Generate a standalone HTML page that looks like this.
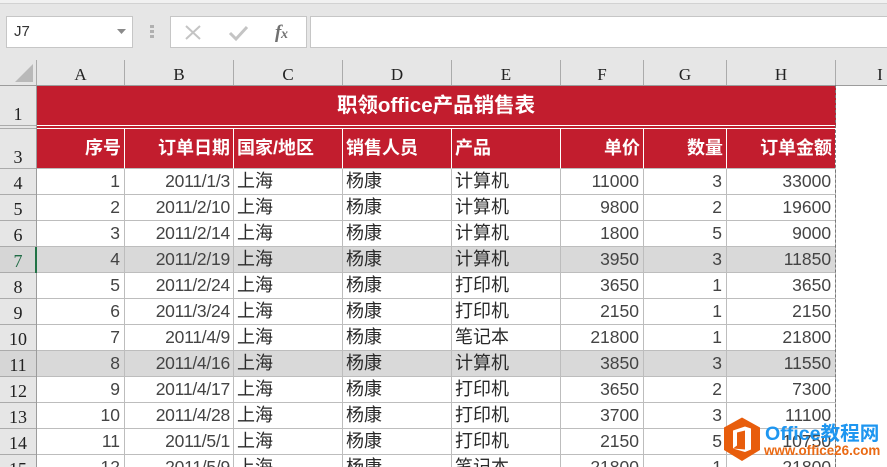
<!DOCTYPE html>
<html><head><meta charset="utf-8">
<style>
html,body{margin:0;padding:0;width:887px;height:467px;overflow:hidden}
body{background:#fff;font-family:"Liberation Sans","Noto Sans CJK SC",sans-serif}
#wrap{position:relative;width:887px;height:467px;overflow:hidden;background:#fff}
.a{position:absolute}
#sheet{position:absolute;left:37px;top:86px;border-collapse:separate;border-spacing:0;table-layout:fixed;width:799px;color:#444}
#sheet td{box-sizing:border-box;padding:0 4px 0 3px;border-right:1px solid #bdbdbd;border-bottom:1px solid #bdbdbd;font-size:17.500px;white-space:nowrap;overflow:hidden;height:26px;line-height:25px;font-family:"Liberation Sans","Noto Sans CJK SC",sans-serif;font-weight:400;text-align:right;vertical-align:bottom}
#sheet td:nth-child(2){padding-right:3px;letter-spacing:-.25px}
#sheet td.l{text-align:left;font-size:18px;color:#2a2a2a;letter-spacing:0}
#sheet tr.g td{background:#d9d9d9}
#sheet tr.h td{background:#c21d2e;color:#fff;font-weight:700;border-color:#fff;border-bottom-color:#bdbdbd;height:40px;line-height:37px;font-size:18px;vertical-align:middle;padding-right:3px;letter-spacing:0}
#sheet td.t{background:#c21d2e;color:#fff;font-weight:700;font-size:20.500px;text-align:center;height:40px;line-height:38px;border:0;border-bottom:1px solid #fff;vertical-align:middle;padding-top:1px;letter-spacing:0}
#sheet td.s{background:#c21d2e;height:3px;line-height:0;font-size:0;border:0;border-bottom:1px solid #fff;padding:0}
.ch{position:absolute;top:60px;height:25px;background:#e6e6e6;border-right:1px solid #ababab;box-sizing:border-box;text-align:center;font:17px/30px "Liberation Serif",serif;color:#222}
.rh{position:absolute;left:0;width:36px;background:#e6e6e6;border-bottom:1px solid #ababab;box-sizing:border-box;text-align:center;font:18px/24px "Liberation Serif",serif;color:#222;padding-top:2px}
.dash{position:absolute;left:835px;top:85px;height:382px;width:0;border-left:1px dashed #777}
</style></head><body><div id="wrap">
<div class="a" style="left:0;top:0;width:887px;height:60px;background:#e6e6e6"></div>
<div class="a" style="left:0;top:3px;width:887px;height:1px;background:#d2d2d2"></div>
<div class="a" style="left:0;top:0;width:887px;height:3px;background:#f1f1f1"></div>
<div class="a" style="left:6px;top:16px;width:127px;height:32px;box-sizing:border-box;background:#fff;border:1px solid #c6c6c6;font-size:15px;line-height:30px;padding-left:7px;color:#333">J7</div>
<svg class="a" style="left:116px;top:29px" width="11" height="6"><path d="M1 0H10L5.500 5Z" fill="#8a8a8a"/></svg>
<div class="a" style="left:150px;top:25px;width:4px;height:3px;background:#b0b0b0;box-shadow:0 5px 0 #b0b0b0,0 10px 0 #b0b0b0"></div>
<div class="a" style="left:170px;top:16px;width:137px;height:32px;box-sizing:border-box;background:#fff;border:1px solid #c6c6c6"></div>
<svg class="a" style="left:170px;top:16px" width="137" height="32">
<path d="M16 10L30 23M30 10L16 23" stroke="#c4c4c4" stroke-width="2" fill="none"/>
<path d="M60 17L66 23L77 11" stroke="#c4c4c4" stroke-width="3" fill="none"/>
<text x="105" y="22" font-family="Liberation Serif,serif" font-style="italic" font-weight="700" font-size="19" fill="#707070">f</text><text x="111" y="22" font-family="Liberation Serif,serif" font-style="italic" font-weight="700" font-size="14" fill="#707070">x</text>
</svg>
<div class="a" style="left:310px;top:16px;width:580px;height:32px;box-sizing:border-box;background:#fff;border:1px solid #c6c6c6"></div>

<div class="a" style="left:0;top:60px;width:887px;height:26px;background:#e6e6e6;border-bottom:1px solid #9c9c9c;box-sizing:border-box"></div>
<div class="ch" style="left:0;width:37px;border-right:1px solid #ababab"></div>
<svg class="a" style="left:15px;top:64px" width="19" height="19"><path d="M18 0V18H0Z" fill="#b9b9b9"/></svg>
<div class="ch" style="left:37px;width:88px">A</div>
<div class="ch" style="left:125px;width:109px">B</div>
<div class="ch" style="left:234px;width:109px">C</div>
<div class="ch" style="left:343px;width:109px">D</div>
<div class="ch" style="left:452px;width:109px">E</div>
<div class="ch" style="left:561px;width:83px">F</div>
<div class="ch" style="left:644px;width:83px">G</div>
<div class="ch" style="left:727px;width:109px">H</div>
<div class="ch" style="left:836px;width:88px;border:0">I</div>
<div class="a" style="left:0;top:85px;width:887px;height:1px;background:#9c9c9c"></div>

<div class="a" style="left:0;top:86px;width:37px;height:381px;background:#e6e6e6;border-right:1px solid #9c9c9c;box-sizing:border-box"></div>
<div class="rh" style="top:86px;height:40px;line-height:57px;padding:0">1</div>
<div class="rh" style="top:126px;height:3px;padding:0"></div>
<div class="rh" style="top:129px;height:40px;line-height:56px;padding:0">3</div>
<div class="rh" style="top:169px;height:26px">4</div>
<div class="rh" style="top:195px;height:26px">5</div>
<div class="rh" style="top:221px;height:26px">6</div>
<div class="rh" style="top:247px;height:26px;background:#d6d6d6;color:#1f6b45">7</div>
<div class="rh" style="top:273px;height:26px">8</div>
<div class="rh" style="top:299px;height:26px">9</div>
<div class="rh" style="top:325px;height:26px">10</div>
<div class="rh" style="top:351px;height:26px;background:#d6d6d6">11</div>
<div class="rh" style="top:377px;height:26px">12</div>
<div class="rh" style="top:403px;height:26px">13</div>
<div class="rh" style="top:429px;height:26px">14</div>
<div class="rh" style="top:455px;height:26px">15</div>
<div class="a" style="left:35px;top:247px;width:2px;height:26px;background:#217346"></div>

<table id="sheet">
<colgroup><col style="width:88px"><col style="width:109px"><col style="width:109px"><col style="width:109px"><col style="width:109px"><col style="width:83px"><col style="width:83px"><col style="width:109px"></colgroup>
<tr><td class="t" colspan="8">职领office产品销售表</td></tr>
<tr><td class="s" colspan="8"></td></tr>
<tr class="h"><td>序号</td><td>订单日期</td><td class="l">国家/地区</td><td class="l">销售人员</td><td class="l">产品</td><td>单价</td><td>数量</td><td>订单金额</td></tr>
<tr><td>1</td><td>2011/1/3</td><td class="l">上海</td><td class="l">杨康</td><td class="l">计算机</td><td>11000</td><td>3</td><td>33000</td></tr>
<tr><td>2</td><td>2011/2/10</td><td class="l">上海</td><td class="l">杨康</td><td class="l">计算机</td><td>9800</td><td>2</td><td>19600</td></tr>
<tr><td>3</td><td>2011/2/14</td><td class="l">上海</td><td class="l">杨康</td><td class="l">计算机</td><td>1800</td><td>5</td><td>9000</td></tr>
<tr class="g"><td>4</td><td>2011/2/19</td><td class="l">上海</td><td class="l">杨康</td><td class="l">计算机</td><td>3950</td><td>3</td><td>11850</td></tr>
<tr><td>5</td><td>2011/2/24</td><td class="l">上海</td><td class="l">杨康</td><td class="l">打印机</td><td>3650</td><td>1</td><td>3650</td></tr>
<tr><td>6</td><td>2011/3/24</td><td class="l">上海</td><td class="l">杨康</td><td class="l">打印机</td><td>2150</td><td>1</td><td>2150</td></tr>
<tr><td>7</td><td>2011/4/9</td><td class="l">上海</td><td class="l">杨康</td><td class="l">笔记本</td><td>21800</td><td>1</td><td>21800</td></tr>
<tr class="g"><td>8</td><td>2011/4/16</td><td class="l">上海</td><td class="l">杨康</td><td class="l">计算机</td><td>3850</td><td>3</td><td>11550</td></tr>
<tr><td>9</td><td>2011/4/17</td><td class="l">上海</td><td class="l">杨康</td><td class="l">打印机</td><td>3650</td><td>2</td><td>7300</td></tr>
<tr><td>10</td><td>2011/4/28</td><td class="l">上海</td><td class="l">杨康</td><td class="l">打印机</td><td>3700</td><td>3</td><td>11100</td></tr>
<tr><td>11</td><td>2011/5/1</td><td class="l">上海</td><td class="l">杨康</td><td class="l">打印机</td><td>2150</td><td>5</td><td>10750</td></tr>
<tr><td>12</td><td>2011/5/9</td><td class="l">上海</td><td class="l">杨康</td><td class="l">笔记本</td><td>21800</td><td>1</td><td>21800</td></tr>
</table>
<div class="dash"></div>

<svg class="a" style="left:722px;top:416px" width="40" height="46" viewBox="0 0 40 46">
<path d="M20 1.500L38 11.500V34L20 45L2 34V11.500Z" fill="#e85d0c"/>
<path d="M11 14.500L23 10.500L29 12.500V33.500L23 36L11 32.500L23 33.500V14.500L15 16.500V29.500L11 32.500Z" fill="#fff"/>
</svg>
<div class="a" style="left:765px;top:421px;font:700 19.600px/26px 'Liberation Sans','Noto Sans CJK SC',sans-serif;color:#1e96f0;white-space:nowrap">Office教程网</div>
<div class="a" style="left:764px;top:443px;font:700 13.400px/16px 'Liberation Sans',sans-serif;color:#ea6a14;white-space:nowrap">www.office26.com</div>
</div></body></html>
